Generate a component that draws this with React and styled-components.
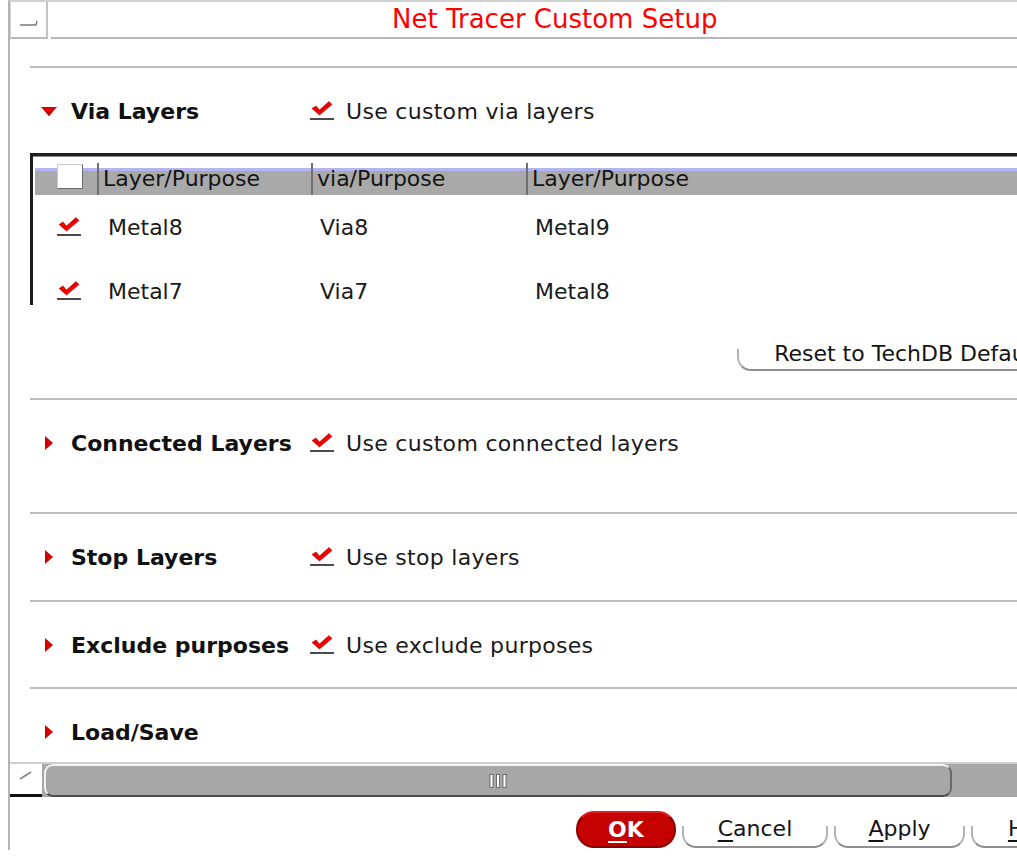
import React from "react";
import styled, { createGlobalStyle } from "styled-components";

const GlobalStyle = createGlobalStyle`
  html, body {
    margin: 0;
    padding: 0;
    background: #fff;
    overflow: hidden;
  }
  body {
    font-family: "DejaVu Sans", "Liberation Sans", sans-serif;
    color: #141414;
  }
`;

const sections = [
  { id: "via", label: "Via Layers", option: "Use custom via layers", open: true, tail: 27 },
  { id: "conn", label: "Connected Layers", option: "Use custom connected layers", tail: 54 },
  { id: "stop", label: "Stop Layers", option: "Use stop layers", tail: 28 },
  { id: "excl", label: "Exclude purposes", option: "Use exclude purposes", tail: 27 },
  { id: "load", label: "Load/Save", tail: 15 },
];

const viaRows = [
  { from: "Metal8", via: "Via8", to: "Metal9" },
  { from: "Metal7", via: "Via7", to: "Metal8" },
];

function CheckMark() {
  return (
    <svg width="24" height="20" viewBox="0 0 24 20">
      <polygon
        points="2,7.5 6,5 9.5,9 19,0.5 22,3.5 9.5,14"
        fill="#f20000"
        stroke="#a80000"
        strokeWidth="0.6"
        strokeLinejoin="round"
      />
      <rect x="0" y="17" width="24" height="2" fill="#4a4a4a" />
    </svg>
  );
}

function Toggle({ open }) {
  return open ? (
    <svg width="16" height="9" viewBox="0 0 16 9">
      <polygon points="0,0 16,0 8,9" fill="#e00000" />
      <polygon points="4,4.5 12,4.5 8,9" fill="#c00000" />
    </svg>
  ) : (
    <svg width="8" height="14" viewBox="0 0 8 14">
      <polygon points="0,0 8,7 0,14" fill="#d40000" />
    </svg>
  );
}

export default function App() {
  return (
    <>
      <GlobalStyle />
      <Window>
        <TitleBar>
          <MinBox>
            <svg width="20" height="8" viewBox="0 0 20 8">
              <path d="M1 6 H17 L18 2" stroke="#7a7a7a" strokeWidth="1.4" fill="none" />
            </svg>
          </MinBox>
          <Title>Net Tracer Custom Setup</Title>
        </TitleBar>

        <Body>
          {sections.map((s) => (
            <Section key={s.id} $tail={s.tail}>
              <Separator />
              <Head>
                <ToggleCell>
                  <Toggle open={s.open} />
                </ToggleCell>
                <HeadLabel>{s.label}</HeadLabel>
                {s.option && (
                  <>
                    <CheckMark />
                    <OptionText>{s.option}</OptionText>
                  </>
                )}
              </Head>

              {s.open && (
                <>
                  <TableFrame>
                    <HeaderRow>
                      <CheckCell>
                        <BlankBox />
                      </CheckCell>
                      <HeaderCell>Layer/Purpose</HeaderCell>
                      <HeaderCell>via/Purpose</HeaderCell>
                      <HeaderCell>Layer/Purpose</HeaderCell>
                    </HeaderRow>
                    {viaRows.map((r) => (
                      <DataRow key={r.from}>
                        <CheckCell>
                          <CheckMark />
                        </CheckCell>
                        <DataCell $pad={11}>{r.from}</DataCell>
                        <DataCell $pad={9}>{r.via}</DataCell>
                        <DataCell $pad={9}>{r.to}</DataCell>
                      </DataRow>
                    ))}
                  </TableFrame>
                  <ResetRow>
                    <TabButton $w={352}>Reset to TechDB Defaults</TabButton>
                  </ResetRow>
                </>
              )}
            </Section>
          ))}
        </Body>

        <ScrollBar>
          <ScrollCorner>
            <svg width="14" height="10" viewBox="0 0 14 10">
              <line x1="1" y1="9" x2="12" y2="2" stroke="#8a8a8a" strokeWidth="2" />
            </svg>
          </ScrollCorner>
          <Track>
            <Thumb>
              <svg width="18" height="14" viewBox="0 0 18 14">
                <rect x="1" y="0.5" width="3" height="13" fill="#fff" stroke="#555" strokeWidth="0.8" />
                <rect x="7.5" y="0.5" width="3" height="13" fill="#fff" stroke="#555" strokeWidth="0.8" />
                <rect x="14" y="0.5" width="3" height="13" fill="#fff" stroke="#555" strokeWidth="0.8" />
              </svg>
            </Thumb>
          </Track>
        </ScrollBar>

        <ButtonRow>
          <OkButton>
            <u>O</u>K
          </OkButton>
          <TabButton $w={146}>
            <u>C</u>ancel
          </TabButton>
          <TabButton $w={131}>
            <u>A</u>pply
          </TabButton>
          <TabButton $w={124}>
            <u>H</u>elp
          </TabButton>
        </ButtonRow>
      </Window>
    </>
  );
}

/*******************************
 *   STYLED COMPONENTS          *
 *******************************/

const Window = styled.div`
  margin-left: 8px;
  width: 1092px;
  height: 848px;
  border-left: 2px solid #b4b4b4;
  border-top: 2px solid #d0d0d0;
  display: flex;
  flex-direction: column;
  overflow: hidden;
`;

const TitleBar = styled.div`
  display: flex;
  height: 37px;
  flex-shrink: 0;
`;

const MinBox = styled.div`
  width: 38px;
  box-sizing: border-box;
  border-left: 1px solid #d4d4d4;
  border-right: 2px solid #c4c4c4;
  border-bottom: 2px solid #b8b8b8;
  display: flex;
  align-items: center;
  justify-content: center;
  padding-top: 6px;
`;

const Title = styled.div`
  flex: 1;
  margin-left: 3px;
  border-bottom: 2px solid #b8b8b8;
  color: #ff0000;
  font-size: 26px;
  line-height: 35px;
  padding-left: 341px;
  white-space: nowrap;
`;

const Body = styled.div`
  padding: 27px 0 0 20px;
  flex-shrink: 0;
`;

const Section = styled.div`
  padding-bottom: ${(p) => p.$tail}px;
`;

const Separator = styled.div`
  height: 2px;
  background: #bdbdbd;
`;

const Head = styled.div`
  display: flex;
  align-items: center;
  height: 30px;
  margin-top: 28px;
  white-space: nowrap;
`;

const ToggleCell = styled.div`
  width: 37px;
  display: flex;
  justify-content: center;
  align-items: center;
`;

const HeadLabel = styled.div`
  width: 239px;
  padding-left: 4px;
  font-size: 22px;
  font-weight: bold;
  color: #111;
`;

const OptionText = styled.div`
  margin-left: 12px;
  font-size: 22px;
  letter-spacing: 0.3px;
  color: #1a1a1a;
`;

const TableFrame = styled.div`
  margin-top: 27px;
  height: 152px;
  box-sizing: border-box;
  border-top: 3px solid #1e1e1e;
  border-left: 3px solid #1e1e1e;
  box-shadow: inset 0 1px 0 #8a8a8a;
  padding: 7px 0 0 2px;
  overflow: hidden;
`;

const GridRow = styled.div`
  display: grid;
  grid-template-columns: 62px 214px 215px 1fr;
  white-space: nowrap;
  font-size: 22px;
`;

const HeaderRow = styled(GridRow)`
  height: 32px;
  background: linear-gradient(
    to bottom,
    #fff 0 5px,
    #b4b4f0 5px 8px,
    #a9a9a9 8px 100%
  );
`;

const CheckCell = styled.div`
  display: flex;
  align-items: center;
  padding-left: 22px;
`;

const BlankBox = styled.div`
  width: 24px;
  height: 23px;
  margin-top: -5px;
  background: #fff;
  border: 1px solid #c8c8c8;
  border-right-color: #6a6a6a;
  border-bottom-color: #6a6a6a;
`;

const HeaderCell = styled.div`
  display: flex;
  align-items: center;
  padding-left: 4px;
  padding-bottom: 2px;
  border-left: 2px solid #707070;
  color: #141414;
`;

const DataRow = styled(GridRow)`
  height: 64px;
  align-items: center;
`;

const DataCell = styled.div`
  padding-left: ${(p) => p.$pad}px;
  color: #1a1a1a;
`;

const ResetRow = styled.div`
  display: flex;
  padding-left: 707px;
  margin-top: 32px;
  height: 34px;
`;

const TabButton = styled.div`
  position: relative;
  width: ${(p) => p.$w}px;
  flex-shrink: 0;
  height: 100%;
  display: flex;
  align-items: center;
  justify-content: center;
  font-size: 22px;
  color: #141414;
  white-space: nowrap;
  box-sizing: border-box;
  padding-bottom: 2px;

  u {
    text-underline-offset: 4px;
    text-decoration-thickness: 2px;
  }

  &::after {
    content: "";
    position: absolute;
    left: 0;
    right: 0;
    bottom: 0;
    height: 20px;
    border: 2px solid #8e8e8e;
    border-top: none;
    border-left-color: #b4b4b4;
    border-right-color: #b4b4b4;
    border-radius: 0 0 14px 14px;
  }
`;

const ScrollBar = styled.div`
  display: flex;
  height: 35px;
  flex-shrink: 0;
  box-sizing: border-box;
  border-top: 2px solid #cfcfcf;
`;

const ScrollCorner = styled.div`
  width: 32px;
  box-sizing: border-box;
  background: #fff;
  border-bottom: 3px solid #111;
  display: flex;
  align-items: center;
  justify-content: center;
  padding-bottom: 8px;
`;

const Track = styled.div`
  flex: 1;
  background: #a7a7a7;
  padding-left: 2px;
  display: flex;
`;

const Thumb = styled.div`
  width: 908px;
  box-sizing: border-box;
  border: 2px solid #f2f2f2;
  border-bottom-color: #4e4e4e;
  border-right-color: #6a6a6a;
  border-radius: 9px;
  display: flex;
  align-items: center;
  justify-content: center;
`;

const ButtonRow = styled.div`
  display: flex;
  gap: 6px;
  height: 37px;
  margin-top: 14px;
  padding-left: 566px;
`;

const OkButton = styled.div`
  width: 100px;
  flex-shrink: 0;
  box-sizing: border-box;
  background: #c40000;
  border: 2px solid #8a0000;
  border-top-color: #e02020;
  border-radius: 18px;
  color: #fff;
  font-size: 22px;
  font-weight: bold;
  display: flex;
  align-items: center;
  justify-content: center;

  u {
    text-underline-offset: 4px;
    text-decoration-thickness: 2px;
  }
`;
